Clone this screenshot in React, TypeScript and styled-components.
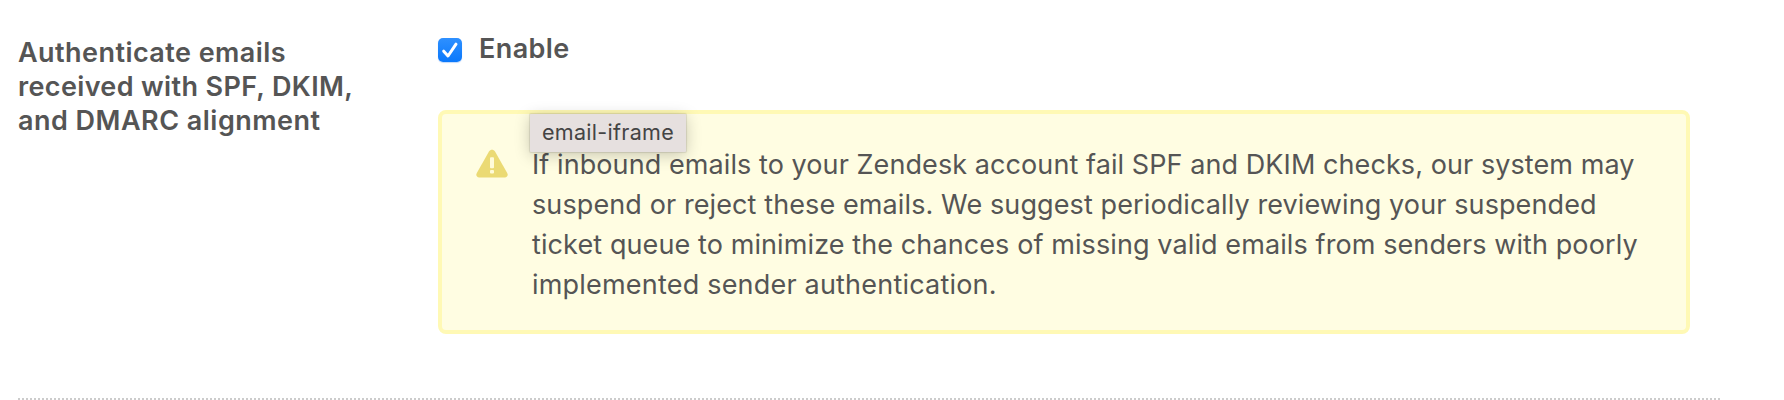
import React from 'react';
import styled, { createGlobalStyle } from 'styled-components';

const GlobalStyle = createGlobalStyle`
  *, *::before, *::after { box-sizing: border-box; }
  body {
    margin: 0;
    background: #fff;
    color: #555;
    font-family: Inter, 'Liberation Sans', sans-serif;
  }
`;

const Setting = styled.section`
  display: flex;
  width: 1702px;
  height: 400px;
  margin-left: 18px;
  border-bottom: 2px dotted #ccc;
`;

const Title = styled.h3`
  flex: 0 0 420px;
  margin: 0;
  padding-top: 36px;
  font-size: 27px;
  font-weight: 600;
  line-height: 34px;
`;

const Line = styled.span<{ $tracking: number }>`
  display: block;
  white-space: nowrap;
  letter-spacing: ${({ $tracking }) => $tracking}px;
`;

const Control = styled.div`
  flex: 0 0 1252px;
  padding-top: 32px;
`;

const CheckboxLabel = styled.label`
  display: flex;
  align-items: flex-start;
  gap: 17px;
  height: 78px;
  font-size: 27px;
  font-weight: 600;
  line-height: 34px;
`;

const CheckboxBox = styled.span`
  width: 24px;
  height: 24px;
  margin-top: 6px;
  border-radius: 5px;
  background: linear-gradient(#2e90ff, #0a78fb);
  box-shadow: 0 1px 1px rgba(0, 100, 230, 0.25);

  svg { display: block; }
`;

const Notice = styled.div`
  position: relative;
  display: flex;
  height: 224px;
  padding: 31px 30px 25px;
  border: 4px solid #fff9b5;
  border-radius: 8px;
  background: #fffde2;
`;

const WarningIcon = styled.svg`
  flex: none;
  margin: 4px 24px 0 4px;
`;

const Message = styled.p`
  margin: 0;
  font-size: 27px;
  line-height: 40px;
`;

const Tooltip = styled.div`
  position: absolute;
  top: 0;
  left: 88px;
  width: 156px;
  height: 38px;
  padding-left: 12px;
  border-radius: 1px;
  background: #e6e0df;
  box-shadow: 0 0 1px 1px rgba(0, 0, 0, 0.1), 0 3px 16px rgba(0, 0, 0, 0.22);
  color: #444;
  font-size: 21.5px;
  line-height: 36px;
`;

const titleLines: [string, number][] = [
  ['Authenticate emails', 0.44],
  ['received with SPF, DKIM,', 0.36],
  ['and DMARC alignment', 0.48],
];

const messageLines: [string, number][] = [
  ['If inbound emails to your Zendesk account fail SPF and DKIM checks, our system may', 0.08],
  ['suspend or reject these emails. We suggest periodically reviewing your suspended', 0.105],
  ['ticket queue to minimize the chances of missing valid emails from senders with poorly', 0.1],
  ['implemented sender authentication.', 0.2],
];

const Lines = ({ lines }: { lines: [string, number][] }) => (
  <>
    {lines.map(([text, tracking]) => (
      <Line key={text} $tracking={tracking}>{text}</Line>
    ))}
  </>
);

export default function App() {
  return (
    <>
      <GlobalStyle />
      <Setting>
        <Title><Lines lines={titleLines} /></Title>
        <Control>
          <CheckboxLabel>
            <CheckboxBox role="checkbox" aria-checked="true">
              <svg width="24" height="24" viewBox="0 0 24 24" fill="none">
                <path d="M5.7 13.2 10 18 18 6.2" stroke="#fff" strokeWidth="3" strokeLinecap="round" strokeLinejoin="round" />
              </svg>
            </CheckboxBox>
            <Line $tracking={0.4}>Enable</Line>
          </CheckboxLabel>
          <Notice>
            <WarningIcon width="32" height="29" viewBox="0 0 32 29">
              <path d="M13 2.6C14.4.2 17.6.2 19 2.6L31.2 24c1.2 2.2.2 4.4-2.4 4.4H3.2C.6 28.4-.4 26.2.8 24Z" fill="#ebda74" />
              <rect x="14" y="8.2" width="4" height="11" rx="1" fill="#fffbd9" />
              <rect x="14" y="21" width="4" height="3.6" rx="1" fill="#fffbd9" />
            </WarningIcon>
            <Message><Lines lines={messageLines} /></Message>
            <Tooltip role="tooltip"><Line $tracking={0.3}>email-iframe</Line></Tooltip>
          </Notice>
        </Control>
      </Setting>
    </>
  );
}
